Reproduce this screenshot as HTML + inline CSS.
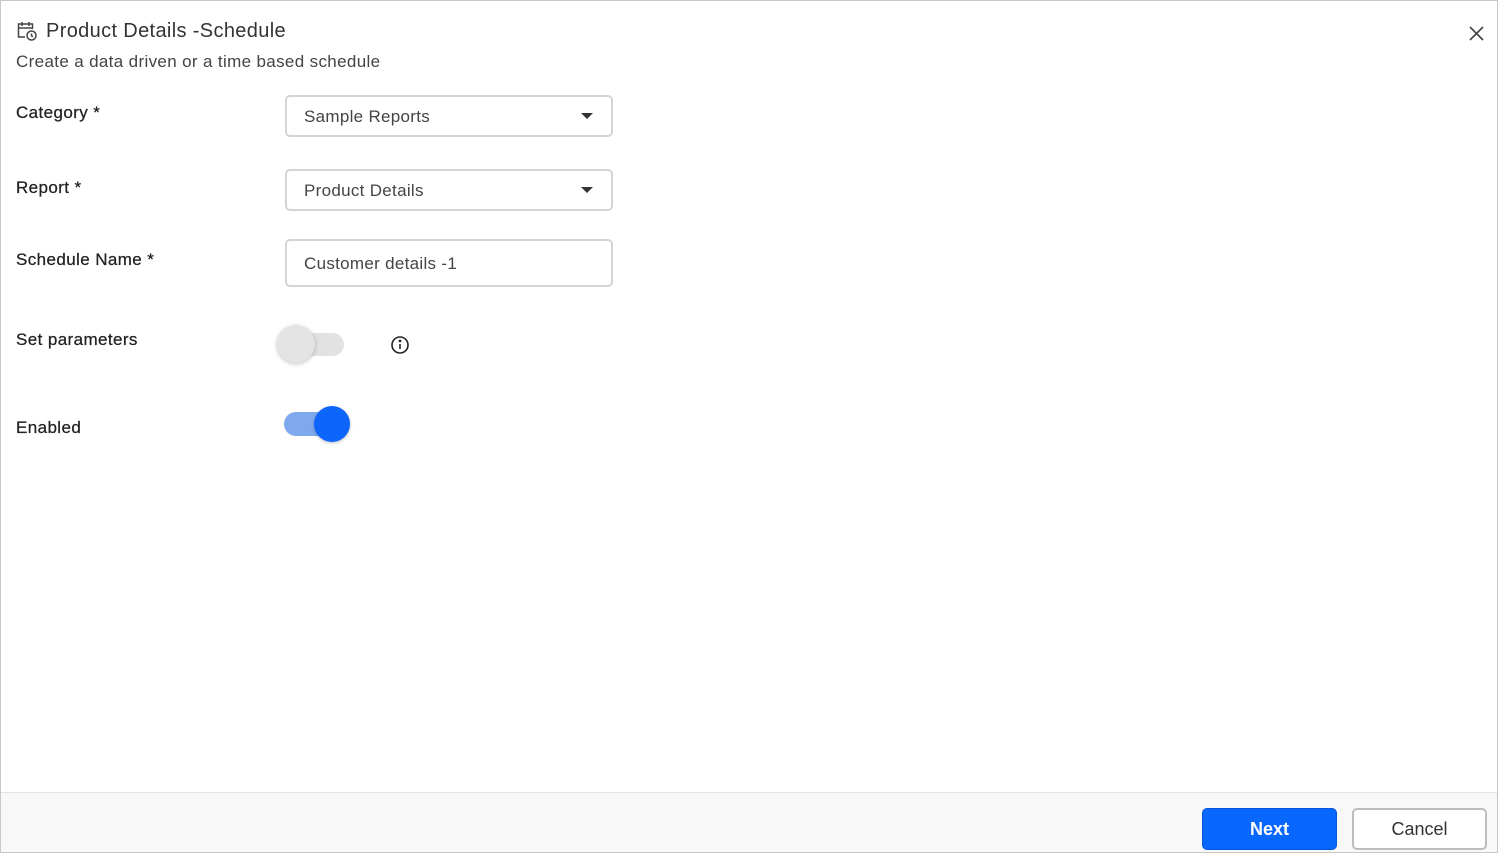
<!DOCTYPE html>
<html><head><meta charset="utf-8"><style>
*{box-sizing:border-box;margin:0;padding:0}
body{width:1498px;height:853px;background:#fff;font-family:"Liberation Sans",sans-serif;color:#333;position:relative;overflow:hidden}
.frame{position:absolute;left:0;top:0;width:1498px;height:853px;border:1px solid #c8c8c8}
.abs{position:absolute}
.title{left:46px;top:20px;font-size:20px;color:#333;letter-spacing:0.35px}
.sub{left:16px;top:52px;font-size:17px;color:#444;letter-spacing:0.35px}
.lbl{left:16px;font-size:17px;color:#222;letter-spacing:0.4px;-webkit-text-stroke:0.25px #222}
.box{left:285px;width:328px;border:2px solid #d4d4d4;border-radius:5px;font-size:17px;color:#444;padding-left:17px;letter-spacing:0.3px}
.caret{position:absolute;right:18px;top:50%;margin-top:-3px;width:0;height:0;border-left:6px solid transparent;border-right:6px solid transparent;border-top:6px solid #333}
.footer{left:1px;top:792px;width:1496px;height:60px;background:#f8f8f8;border-top:1px solid #e2e2e2}
.btn{top:808px;height:42px;border-radius:5px;font-size:18px;text-align:center;line-height:42px}
</style></head><body>
<div class="frame"></div>
<svg class="abs" style="left:16px;top:20px" width="22" height="22" viewBox="0 0 22 22" fill="none" stroke="#444" stroke-width="1.5">
<path d="M9 17H2.5V4h14v5"/><path d="M2.5 8h14"/><path d="M6 2v4M13 2v4"/><circle cx="15.5" cy="15.5" r="4.5"/><path d="M15.5 13.5v2.2l1.5 1"/></svg>
<div class="abs title">Product Details -Schedule</div>
<div class="abs sub">Create a data driven or a time based schedule</div>
<svg class="abs" style="left:1469px;top:26px" width="15" height="15" viewBox="0 0 15 15" stroke="#444" stroke-width="1.6"><path d="M1 1L14 14M14 1L1 14"/></svg>

<div class="abs lbl" style="top:103px">Category *</div>
<div class="abs box" style="top:95px;height:42px;line-height:39px">Sample Reports<span class="caret"></span></div>
<div class="abs lbl" style="top:178px">Report *</div>
<div class="abs box" style="top:169px;height:42px;line-height:39px">Product Details<span class="caret"></span></div>
<div class="abs lbl" style="top:250px">Schedule Name *</div>
<div class="abs box" style="top:239px;height:48px;line-height:45px">Customer details -1</div>

<div class="abs lbl" style="top:330px">Set parameters</div>
<div class="abs" style="left:283px;top:333px;width:61px;height:23px;border-radius:12px;background:#e2e2e2"></div>
<div class="abs" style="left:277px;top:325px;width:38px;height:38px;border-radius:50%;background:#e4e4e4;box-shadow:0 1px 4px rgba(0,0,0,.25)"></div>
<svg class="abs" style="left:390px;top:335px" width="20" height="20" viewBox="0 0 20 20" fill="none" stroke="#222" stroke-width="1.6"><circle cx="10" cy="10" r="8"/><path d="M10 9v5"/><circle cx="10" cy="6" r=".6" fill="#222"/></svg>

<div class="abs lbl" style="top:418px">Enabled</div>
<div class="abs" style="left:284px;top:412px;width:62px;height:24px;border-radius:12px;background:#7fa9ee"></div>
<div class="abs" style="left:314px;top:406px;width:36px;height:36px;border-radius:50%;background:#0d65fb;box-shadow:0 1px 3px rgba(0,0,0,.25)"></div>

<div class="abs footer"></div>
<div class="abs btn" style="left:1202px;width:135px;background:#0867fd;border:1px solid #0656d8;color:#fff;font-weight:bold;line-height:40px">Next</div>
<div class="abs btn" style="left:1352px;width:135px;background:#fff;border:2px solid #bdbdbd;color:#333;line-height:38px">Cancel</div>
</body></html>
